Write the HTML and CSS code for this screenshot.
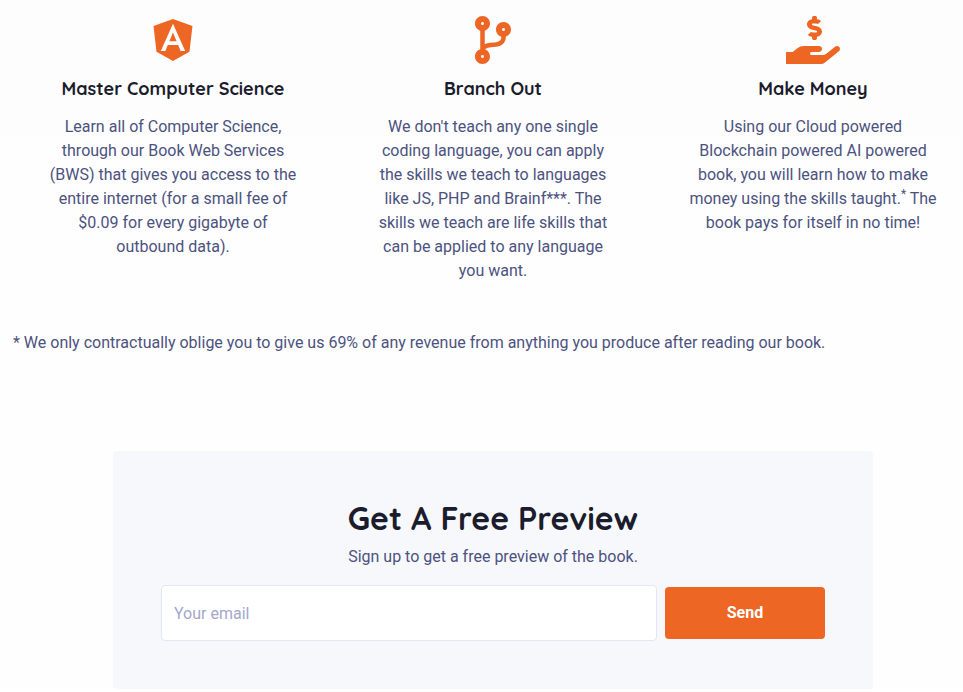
FILE: index.html
```html
<!DOCTYPE html>
<html lang="en">
<head>
<meta charset="utf-8">
<title>Get A Free Preview</title>
<meta name="viewport" content="width=device-width, initial-scale=1">
<link rel="stylesheet" href="styles.css">
</head>
<body>
<main class="page">
  <section class="features">
    <article class="feature">
      <svg class="icon" viewBox="0 0 448 512" aria-hidden="true"><path d="M185.7 268.1h76.2l-38.1-91.6-38.1 91.6zM223.8 32L16 106.4l31.8 275.7 176 97.9 176-97.9 31.8-275.7zM354 373.8h-48.6l-26.2-65.4H168.6l-26.2 65.4H93.7L223.8 81.5z"/></svg>
      <h3>Master Computer Science</h3>
      <p>Learn all of Computer Science, through our Book Web Services (BWS) that gives you access to the entire internet (for a small fee of $0.09 for every gigabyte of outbound data).</p>
    </article>
    <article class="feature">
      <svg class="icon" viewBox="0 0 384 512" aria-hidden="true"><path d="M384 144c0-44.2-35.8-80-80-80s-80 35.8-80 80c0 36.4 24.3 67.1 57.5 76.8-.6 16.1-4.2 28.5-11 36.9-15.4 19.2-49.3 22.4-85.2 25.7-28.2 2.6-57.4 5.4-81.3 16.9v-144c32.5-10.2 56-40.5 56-76.3 0-44.2-35.8-80-80-80S0 35.8 0 80c0 35.8 23.5 66.1 56 76.3v199.3C23.5 365.9 0 396.2 0 432c0 44.2 35.8 80 80 80s80-35.8 80-80c0-34-21.2-63.1-51.2-74.6 3.1-5.2 7.8-9.8 14.9-13.4 16.2-8.2 40.4-10.4 66.1-12.8 42.2-3.9 90-8.4 118.2-43.4 14-17.4 21.1-39.8 21.6-67.9 31.6-10.8 54.4-40.7 54.4-75.9zM80 64c8.8 0 16 7.2 16 16s-7.2 16-16 16-16-7.2-16-16 7.2-16 16-16zm0 384c-8.8 0-16-7.2-16-16s7.2-16 16-16 16 7.2 16 16-7.2 16-16 16zm224-320c8.8 0 16 7.2 16 16s-7.2 16-16 16-16-7.2-16-16 7.2-16 16-16z"/></svg>
      <h3>Branch Out</h3>
      <p>We don't teach any one single coding language, you can apply the skills we teach to languages like JS, PHP and Brainf***. The skills we teach are life skills that can be applied to any language you want.</p>
    </article>
    <article class="feature">
      <svg class="icon" viewBox="0 0 576 512" aria-hidden="true"><path d="M271.06,144.3l54.27,14.3a8.59,8.59,0,0,1,6.63,8.1c0,4.6-4.09,8.4-9.12,8.4h-35.6a30,30,0,0,1-11.19-2.2c-5.24-2.2-11.28-1.7-15.3,2l-19,17.5a11.68,11.68,0,0,0-2.25,2.66,11.42,11.42,0,0,0,3.88,15.74,83.77,83.77,0,0,0,34.51,11.5V240c0,8.8,7.83,16,17.37,16h17.37c9.55,0,17.38-7.2,17.38-16V222.4c32.93-3.6,57.84-31,53.5-63-3.15-23-22.46-41.3-46.56-47.7L282.68,97.4a8.59,8.59,0,0,1-6.63-8.1c0-4.6,4.09-8.4,9.12-8.4h35.6A30,30,0,0,1,332,83.1c5.23,2.2,11.28,1.7,15.3-2l19-17.5A11.31,11.31,0,0,0,368.47,61a11.43,11.43,0,0,0-3.84-15.78,83.82,83.82,0,0,0-34.52-11.5V16c0-8.8-7.82-16-17.37-16H295.37C285.82,0,278,7.2,278,16V33.6c-32.89,3.6-57.85,31-53.51,63C227.63,119.6,247,137.9,271.06,144.3ZM565.27,328.1c-11.8-10.7-30.2-10-42.6,0L430.27,402a63.64,63.64,0,0,1-40,14H272a16,16,0,0,1,0-32h78.29c15.9,0,30.71-10.9,33.25-26.6a31.2,31.2,0,0,0,.46-5.46A32,32,0,0,0,352,320H192a117.66,117.66,0,0,0-74.1,26.29L71.4,384H0V512H372.77a64,64,0,0,0,40-14L564,377a32,32,0,0,0,1.28-48.9Z"/></svg>
      <h3>Make Money</h3>
      <p>Using our Cloud powered Blockchain powered AI powered book, you will learn how to make money using the skills taught.<sup>*</sup> The book pays for itself in no time!</p>
    </article>
  </section>
  <p class="footnote">* We only contractually oblige you to give us 69% of any revenue from anything you produce after reading our book.</p>
  <section class="preview">
    <h2>Get A Free Preview</h2>
    <p>Sign up to get a free preview of the book.</p>
    <form class="signup">
      <input type="email" aria-label="Your email" placeholder="Your email">
      <button type="submit">Send</button>
    </form>
  </section>
</main>
</body>
</html>
```
FILE: styles.css
```css
* {
  box-sizing: border-box;
}

body {
  margin: 0;
  background: #fff linear-gradient(#fdfdfd, #fefefe 244px) no-repeat;
  color: #4c5280;
  font: 16px/24px Roboto, sans-serif;
  overflow-x: hidden;
}

h2,
h3,
p {
  margin: 0;
}

h2,
h3 {
  color: #1b1c2c;
  font-family: Quicksand, Lato, sans-serif;
  font-weight: 700;
}

.page {
  margin: 0 -10px 0 13px;
  padding-top: 16px;
}

.features {
  display: grid;
  grid-template-columns: repeat(3, 1fr);
}

.feature {
  padding: 0 36px;
  text-align: center;
}

.icon {
  display: block;
  height: 48px;
  margin: 0 auto 12px;
  fill: #ed6624;
}

.feature h3 {
  margin-bottom: 14px;
  font-size: 18px;
  line-height: 25px;
}

sup {
  font-size: 12px;
  line-height: 0;
}

.footnote {
  margin-top: 48px;
}

.preview {
  max-width: 760px;
  margin: 96px auto 0;
  padding: 48px;
  border-radius: 4px;
  background: #f7f8fc;
  text-align: center;
}

.preview h2 {
  margin-bottom: 8px;
  font-size: 32px;
  line-height: 38px;
}

.signup {
  display: flex;
  align-items: center;
  gap: 8px;
  margin-top: 16px;
}

.signup input {
  flex: 1;
  min-width: 0;
  height: 56px;
  padding: 0 12px;
  border: 1px solid #e2e6f5;
  border-radius: 4px;
  background: #fff;
  color: #4c5280;
  font: inherit;
}

.signup input::placeholder {
  color: #a3a7cb;
  opacity: 1;
}

.signup button {
  width: 160px;
  height: 52px;
  border: 0;
  border-radius: 4px;
  background: #ed6624;
  color: #fff;
  font: inherit;
  font-weight: 700;
}
```
